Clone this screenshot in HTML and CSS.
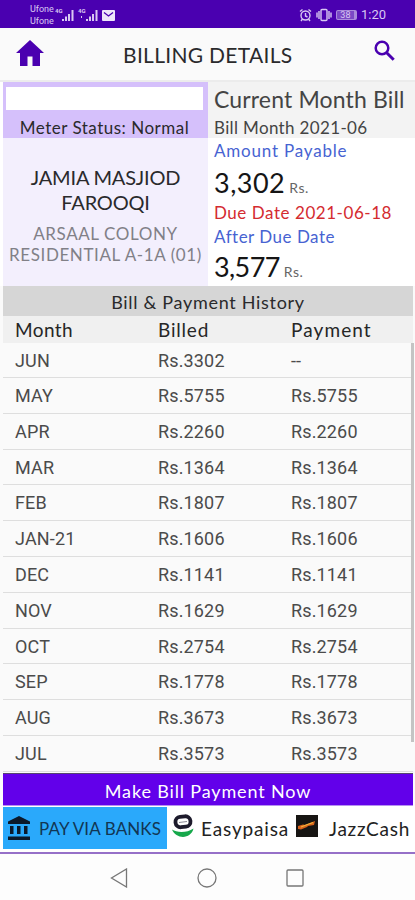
FILE: index.html
```html
<!DOCTYPE html>
<html lang="en">
<head>
    <meta charset="UTF-8">
    <meta name="viewport" content="width=device-width, initial-scale=1.0">
    <title>Billing Details</title>
    <link rel="stylesheet" href="styles.css">
</head>
<body>

    <div class="status-bar">
        <div class="carrier"><span>Ufone</span><span>Ufone</span></div>
        <svg class="signals" width="61" height="16" viewBox="0 0 61 16">
            <g fill="#d9c8f2">
                <text x="0" y="6" class="net">4G</text>
                <rect x="7" y="12" width="2" height="2"/>
                <rect x="10" y="9.500" width="2" height="4.500"/>
                <rect x="13" y="7" width="2" height="7"/>
                <rect x="16.500" y="3" width="2" height="11"/>
                <text x="23" y="6" class="net">4G</text>
                <rect x="26" y="9" width="1" height="2"/>
                <rect x="31" y="12" width="2" height="2"/>
                <rect x="34" y="9.500" width="2" height="4.500"/>
                <rect x="37" y="7" width="2" height="7"/>
                <rect x="40.500" y="3" width="2" height="11"/>
            </g>
            <rect x="47" y="3" width="13" height="11" rx="1" fill="#eee6fa"/>
            <path d="M49 5.500l4.500 3.500L58 5.500" fill="none" stroke="#4a00b0" stroke-width="1.300"/>
        </svg>
        <div class="status-right">
            <svg width="13" height="14" viewBox="0 0 13 14" fill="none" stroke="#d9c8f2" stroke-width="1.400">
                <circle cx="6.500" cy="7.500" r="4.500"/>
                <path d="M1 3.500L3.500 1.500M12 3.500L9.500 1.500M6.500 5v3l2 1M3.500 11L2 13M9.500 11l1.500 2"/>
            </svg>
            <svg width="16" height="14" viewBox="0 0 16 14" fill="none" stroke="#d9c8f2" stroke-width="1.400">
                <rect x="5" y="1.500" width="6" height="11" rx="1"/>
                <path d="M3 3v8M13 3v8M1 4.500v5M15 4.500v5"/>
            </svg>
            <div class="battery">38</div>
            <span class="clock">1:20</span>
        </div>
    </div>

    <header class="app-bar">
        <svg class="home" width="28" height="26" viewBox="0 0 28 26" fill="#4a00b0">
            <path d="M14 0L0 13h4v13h7.500v-9.500h5V26H24V13h4l-4-3.800z"/>
        </svg>
        <h1>BILLING DETAILS</h1>
        <svg class="search" width="21" height="21" viewBox="0 0 21 21" fill="none" stroke="#4a00b0">
            <circle cx="8" cy="8" r="6.300" stroke-width="2.500"/>
            <path d="M12.700 12.700l7 7" stroke-width="3"/>
        </svg>
    </header>

    <section class="summary">
        <div class="customer">
            <div class="meter">
                <div class="ref-no"></div>
                <div class="meter-status">Meter Status: Normal</div>
            </div>
            <div class="name">JAMIA MASJIOD<br>FAROOQI</div>
            <div class="address">ARSAAL COLONY<br>RESIDENTIAL A-1A (01)</div>
        </div>
        <div class="bill">
            <div class="bill-head">
                <div class="bill-title">Current Month Bill</div>
                <div class="bill-month">Bill Month 2021-06</div>
            </div>
            <div class="label payable">Amount Payable</div>
            <div class="amount"><span>3,302</span><small>Rs.</small></div>
            <div class="label due">Due Date 2021-06-18</div>
            <div class="label after">After Due Date</div>
            <div class="amount late"><span>3,577</span><small>Rs.</small></div>
        </div>
    </section>

    <section class="history">
        <h2>Bill &amp; Payment History</h2>
        <div class="row head"><span class="h-month">Month</span><span class="h-billed">Billed</span><span class="h-payment">Payment</span></div>
        <div class="rows">
            <div class="row"><span>JUN</span><span>Rs.3302</span><span>--</span></div>
            <div class="row"><span>MAY</span><span>Rs.5755</span><span>Rs.5755</span></div>
            <div class="row"><span>APR</span><span>Rs.2260</span><span>Rs.2260</span></div>
            <div class="row"><span>MAR</span><span>Rs.1364</span><span>Rs.1364</span></div>
            <div class="row"><span>FEB</span><span>Rs.1807</span><span>Rs.1807</span></div>
            <div class="row"><span>JAN-21</span><span>Rs.1606</span><span>Rs.1606</span></div>
            <div class="row"><span>DEC</span><span>Rs.1141</span><span>Rs.1141</span></div>
            <div class="row"><span>NOV</span><span>Rs.1629</span><span>Rs.1629</span></div>
            <div class="row"><span>OCT</span><span>Rs.2754</span><span>Rs.2754</span></div>
            <div class="row"><span>SEP</span><span>Rs.1778</span><span>Rs.1778</span></div>
            <div class="row"><span>AUG</span><span>Rs.3673</span><span>Rs.3673</span></div>
            <div class="row"><span>JUL</span><span>Rs.3573</span><span>Rs.3573</span></div>
            <div class="scrollbar"></div>
        </div>
    </section>

    <div class="pay-title">Make Bill Payment Now</div>
    <div class="pay-options">
        <div class="option banks">
            <svg width="22" height="24" viewBox="0 0 22 24" fill="#0b1a2b">
                <path d="M11 0L0 5.500V8h22V5.500zM2 10h3.500v8H2zM9 10h3.500v8H9zM16 10h3.500v8H16zM0 20.500h22V24H0z"/>
            </svg>
            <span>PAY VIA BANKS</span>
        </div>
        <div class="option easypaisa">
            <svg width="22" height="24" viewBox="0 0 22 24" fill="none">
                <rect x="3.500" y="2.500" width="15" height="10.500" rx="5" stroke="#1d1b2c" stroke-width="3.800" transform="rotate(-6 11 8)"/>
                <path d="M7 8.500l8-1" stroke="#8b8a96" stroke-width="1"/>
                <path d="M0 15.500c5 3.500 15 3.500 21.500-1C19 25.500 4 25.500 0 15.500z" fill="#16a84b"/>
            </svg>
            <span>Easypaisa</span>
        </div>
        <div class="option jazzcash">
            <svg width="22" height="22" viewBox="0 0 22 22">
                <rect width="22" height="22" fill="#171513"/>
                <path d="M2 11l5-1.500 2 .5 10-4-1 4-6 1-1 1-6 2.500-3-.5z" fill="#d9641c"/>
                <path d="M5 12l5-2 7-2.500" stroke="#f3b63a" stroke-width="1.200" fill="none"/>
            </svg>
            <span>JazzCash</span>
        </div>
    </div>

    <nav class="nav-bar">
        <svg width="18" height="20" viewBox="0 0 18 20" fill="none" stroke="#777" stroke-width="1.300"><path d="M16.500 1v18L1.500 10z"/></svg>
        <svg width="20" height="20" viewBox="0 0 20 20" fill="none" stroke="#777" stroke-width="1.300"><circle cx="10" cy="10" r="9"/></svg>
        <svg width="18" height="18" viewBox="0 0 18 18" fill="none" stroke="#777" stroke-width="1.300"><rect x="1" y="1" width="16" height="16" rx="1"/></svg>
    </nav>

</body>
</html>
```
FILE: styles.css
```css
* {
    box-sizing: border-box;
}

body {
    margin: 0;
    height: 900px;
    overflow: hidden;
    background-color: #fcfbfd;
    font-family: Lato, "Open Sans", sans-serif;
    color: #2a2a2c;
    white-space: nowrap;
}

h1, h2 {
    margin: 0;
    font-weight: normal;
}

.status-bar {
    display: flex;
    align-items: center;
    height: 28px;
    padding: 1px 29px 0 30px;
    background-color: #4a00b0;
    color: #d9c8f2;
}

.carrier {
    display: flex;
    flex-direction: column;
    width: 25px;
    font: 9px/12px Roboto, sans-serif;
}

.net {
    font: bold 6px Roboto, sans-serif;
}

.status-right {
    display: flex;
    align-items: center;
    gap: 4px;
    margin-left: auto;
}

.battery {
    width: 21px;
    height: 10px;
    border: 1px solid #a98bdc;
    border-right-width: 3px;
    border-radius: 2px;
    background-color: #7b49c6;
    font: 9px/8px Roboto, sans-serif;
    text-align: center;
}

.clock {
    font: 13px/14px Roboto, sans-serif;
}

.app-bar {
    display: grid;
    grid-template-columns: 107px 1fr 41px;
    align-items: center;
    height: 54px;
    padding: 0 0 2px 16px;
    background-color: #fafafa;
    border-bottom: 2px solid #ececec;
}

.app-bar h1 {
    padding-top: 2px;
    font-size: 21px;
    letter-spacing: 0.3px;
}

.search {
    margin-top: -5px;
}

.summary {
    display: grid;
    grid-template-columns: 205px 1fr;
    height: 204px;
    padding-left: 3px;
    background-color: white;
}

.customer {
    background-color: #f3effd;
    text-align: center;
}

.meter {
    height: 56px;
    padding: 5px 5px 0 3px;
    background-color: #d5c0fb;
}

.ref-no {
    height: 23px;
    background-color: white;
}

.meter-status {
    font-size: 17px;
    line-height: 35px;
    letter-spacing: 0.5px;
}

.name {
    margin-top: 27px;
    font-size: 20px;
    line-height: 25px;
    letter-spacing: -0.2px;
}

.address {
    margin-top: 8px;
    font-size: 17px;
    line-height: 21px;
    letter-spacing: 0.6px;
    color: #818087;
}

.bill-head {
    height: 56px;
    padding-left: 6px;
    background-color: #f3f3f3;
    color: #444;
}

.bill-title {
    font-size: 23px;
    line-height: 35px;
    letter-spacing: 0.15px;
}

.bill-month {
    font-size: 17px;
    line-height: 21px;
    letter-spacing: 0.35px;
}

.label {
    padding-left: 6px;
    font-size: 17px;
    line-height: 26px;
    height: 24px;
}

.payable, .after {
    color: #4763d2;
    letter-spacing: 0.8px;
}

.due {
    color: #d42b30;
    letter-spacing: 0.55px;
}

.after {
    letter-spacing: 0.5px;
}

.amount {
    display: flex;
    align-items: baseline;
    gap: 4px;
    height: 38px;
    padding-left: 6px;
    font-size: 27px;
    line-height: 41px;
    letter-spacing: 0.5px;
    color: #151515;
}

.amount.late {
    line-height: 38px;
    letter-spacing: -0.6px;
}

.amount small {
    font-size: 14px;
    letter-spacing: 0.5px;
    color: #666;
}

.history {
    position: relative;
    height: 487px;
    padding: 0 2px 0 3px;
    background-color: #fafafa;
}

.history h2 {
    height: 30px;
    background-color: #d6d6d6;
    font-size: 18px;
    line-height: 32px;
    letter-spacing: 0.7px;
    text-align: center;
}

.row {
    display: grid;
    grid-template-columns: 143px 133px 1fr;
    height: 35.8px;
    padding-left: 12px;
    border-bottom: 1px solid #dedede;
    font: 18px/35px Roboto, sans-serif;
    letter-spacing: 0.15px;
    color: #4b4b4b;
}

.rows .row:first-child {
    height: 35px;
}

.row.head {
    height: 27px;
    border: 0;
    background-color: #f0f0f0;
    font: 19px/28px Lato, sans-serif;
    color: #262626;
}

.h-month {
    letter-spacing: 0.4px;
}

.h-billed {
    letter-spacing: 0.8px;
}

.h-payment {
    letter-spacing: 1.1px;
}

.scrollbar {
    position: absolute;
    top: 57px;
    right: 1px;
    width: 3px;
    height: 399px;
    background-color: #c4c4c4;
}

.pay-title {
    height: 33px;
    margin: 0 2px 0 3px;
    border-top: 1px solid #55456f;
    border-bottom: 1px solid #b690f0;
    background-color: #6200ea;
    color: white;
    font-size: 18px;
    line-height: 34px;
    letter-spacing: 0.85px;
    text-align: center;
}

.pay-options {
    display: grid;
    grid-template-columns: 164px 124px 1fr;
    height: 46px;
    padding: 1px 2px 3px 3px;
    background-color: white;
}

.option {
    display: flex;
    align-items: center;
    font-size: 19px;
    letter-spacing: 0.85px;
    color: #222;
}

.banks {
    gap: 9px;
    padding-left: 5px;
    background-color: #2aa9fb;
    color: #123653;
    font-size: 17px;
    letter-spacing: 0.1px;
}

.easypaisa {
    gap: 7px;
    padding-left: 5px;
}

.easypaisa svg, .jazzcash svg {
    margin-top: -4px;
}

.jazzcash {
    gap: 11px;
    padding-left: 5px;
    letter-spacing: 0.75px;
}

.nav-bar {
    display: flex;
    align-items: center;
    gap: 69px;
    height: 49px;
    padding: 0 0 0 110px;
    border-top: 2px solid #9670c8;
    background-color: #fdfdfd;
}
```
